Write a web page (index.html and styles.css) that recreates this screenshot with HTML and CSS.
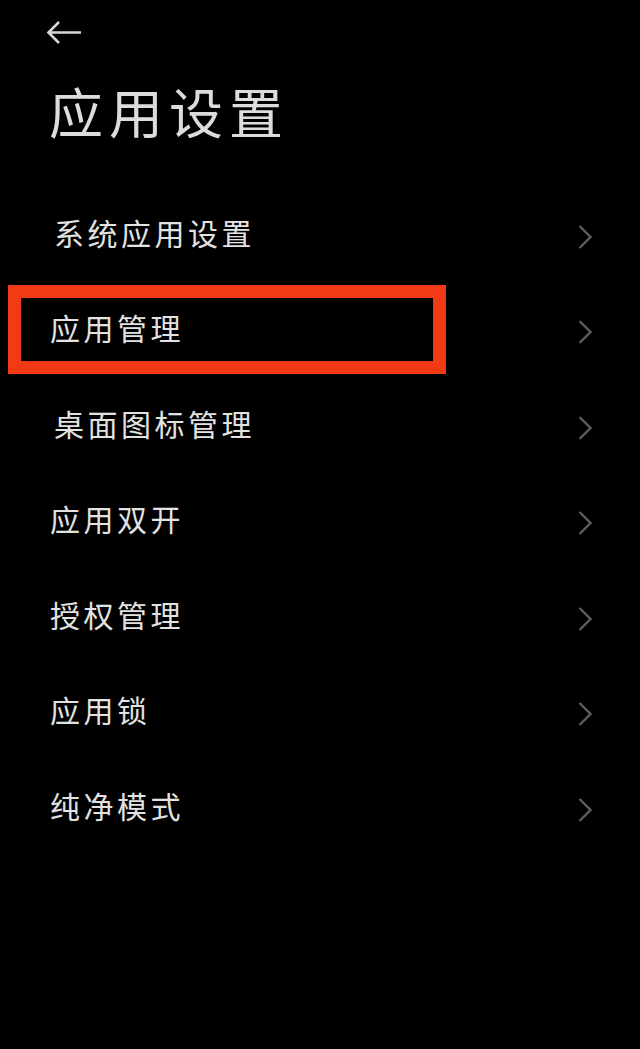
FILE: index.html
```html
<!DOCTYPE html>
<html lang="zh-CN">
<head>
<meta charset="utf-8">
<title>应用设置</title>
<link rel="stylesheet" href="styles.css">
</head>
<body>
<main class="screen">
  <header class="header">
    <svg class="back" viewBox="0 0 36 26" width="36" height="26"><path d="M35 12.5H3M13 2 2.500 12.500 13 23"/></svg>
    <h1 class="title">应用设置</h1>
  </header>
  <ul class="list">
    <li class="row"><span class="label">系统应用设置</span><svg class="chev" viewBox="0 0 14 24" width="14" height="24"><path d="M1.500 1 12.500 12 1.500 23"/></svg></li>
    <li class="row row-marked"><span class="label label-tight">应用管理</span><svg class="chev" viewBox="0 0 14 24" width="14" height="24"><path d="M1.500 1 12.500 12 1.500 23"/></svg><div class="mark"></div></li>
    <li class="row"><span class="label">桌面图标管理</span><svg class="chev" viewBox="0 0 14 24" width="14" height="24"><path d="M1.500 1 12.500 12 1.500 23"/></svg></li>
    <li class="row"><span class="label label-tight">应用双开</span><svg class="chev" viewBox="0 0 14 24" width="14" height="24"><path d="M1.500 1 12.500 12 1.500 23"/></svg></li>
    <li class="row"><span class="label label-tight">授权管理</span><svg class="chev" viewBox="0 0 14 24" width="14" height="24"><path d="M1.500 1 12.500 12 1.500 23"/></svg></li>
    <li class="row"><span class="label label-tight">应用锁</span><svg class="chev" viewBox="0 0 14 24" width="14" height="24"><path d="M1.500 1 12.500 12 1.500 23"/></svg></li>
    <li class="row"><span class="label label-tight">纯净模式</span><svg class="chev" viewBox="0 0 14 24" width="14" height="24"><path d="M1.500 1 12.500 12 1.500 23"/></svg></li>
  </ul>
</main>
</body>
</html>
```
FILE: styles.css
```css
* { box-sizing: border-box; }
html, body { margin: 0; padding: 0; background: #000; }
.screen {
  width: 640px;
  height: 1049px;
  overflow: hidden;
  background: #000;
  color: #e2e2e2;
  font-family: "Noto Sans CJK SC", "Noto Sans", sans-serif;
}
.header {
  display: flex;
  flex-direction: column;
  align-items: flex-start;
  padding: 20px 0 0 46px;
  height: 184px;
}
.back { display: block; }
.back path { fill: none; stroke: #d6d6d6; stroke-width: 2.6; }
.title {
  margin: 35px 0 0 3px;
  font-size: 54px;
  line-height: 60px;
  font-weight: 400;
  letter-spacing: 6px;
  color: #dcdcdc;
}
.list { list-style: none; margin: 0; padding: 0; }
.row {
  position: relative;
  display: flex;
  align-items: center;
  justify-content: space-between;
  height: 95.500px;
  padding: 0 48px 0 54px;
}
.label {
  font-size: 30px;
  line-height: 40px;
  letter-spacing: 3.500px;
}
.label-tight { margin-left: -4px; }
.chev { margin-top: 10px; }
.chev path { fill: none; stroke: #5c5c5c; stroke-width: 2.400; }
.mark {
  position: absolute;
  left: 8px;
  top: 5.500px;
  width: 438px;
  height: 89px;
  border: 13px solid #f23a14;
}
```
